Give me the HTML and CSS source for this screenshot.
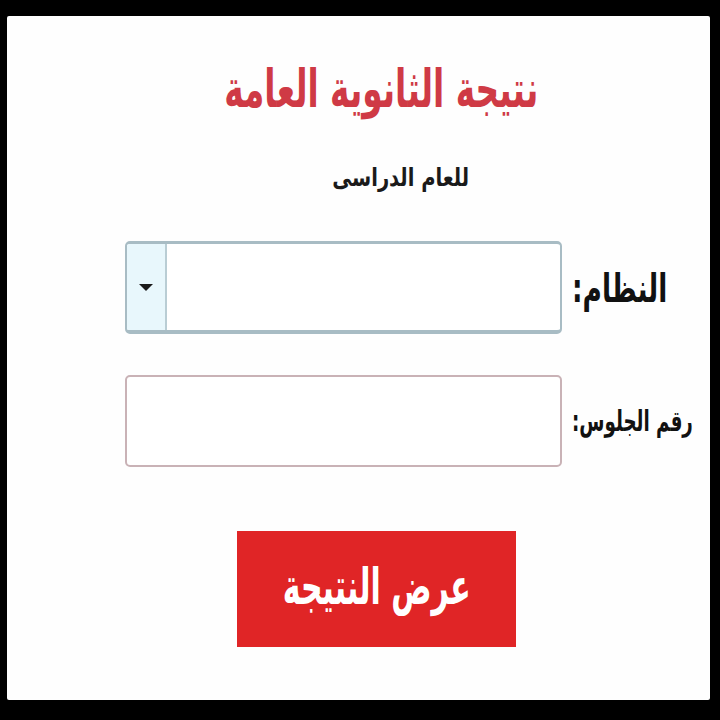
FILE: index.html
```html
<!DOCTYPE html>
<html lang="ar">
<head>
<meta charset="utf-8">
<link rel="stylesheet" href="styles.css">
</head>
<body>
<div class="panel">
  <h1 class="title"><span class="squeeze sq-title">نتيجة الثانوية العامة</span></h1>
  <p class="subtitle"><span class="squeeze sq-sub">للعام الدراسى</span></p>
  <div class="row row-select">
    <div class="select">
      <div class="arrow"><span class="tri"></span></div>
      <div class="field"></div>
    </div>
    <label class="label label-big"><span class="squeeze sq-big">النظام:</span></label>
  </div>
  <div class="row row-input">
    <div class="input"></div>
    <label class="label label-small"><span class="squeeze sq-small">رقم الجلوس:</span></label>
  </div>
  <div class="btn-row">
    <button class="btn"><span class="squeeze sq-btn">عرض النتيجة</span></button>
  </div>
</div>
</body>
</html>
```
FILE: styles.css
```css
html, body {
  margin: 0;
  padding: 0;
  background: #000;
}
body {
  width: 720px;
  height: 720px;
  overflow: hidden;
  font-family: "DejaVu Sans", sans-serif;
}
.panel {
  margin: 16px 10px 0 7px;
  height: 684px;
  background: #fefefe;
  display: flex;
  flex-direction: column;
  box-sizing: border-box;
  border-radius: 2px;
  overflow: hidden;
}
.squeeze {
  display: inline-block;
  white-space: nowrap;
  direction: rtl;
}
.title {
  margin: 42px 0 0 0;
  padding-left: 46px;
  text-align: center;
  font-size: 52px;
  line-height: 62px;
  font-weight: bold;
  color: #cf3a45;
}
.sq-title { transform: scaleX(0.63); }
.subtitle {
  margin: 43px 0 0 0;
  padding-left: 84px;
  text-align: center;
  font-size: 25px;
  line-height: 30px;
  font-weight: bold;
  color: #1a1a1a;
}
.sq-sub { transform: scaleX(0.78); }
.row {
  display: flex;
  align-items: center;
  padding-left: 118px;
  gap: 10px;
  overflow: hidden;
}
.row-select { margin-top: 48px; }
.row-input { margin-top: 41px; }
.select {
  flex-shrink: 0;
  width: 437px;
  height: 93px;
  box-sizing: border-box;
  border: 2px solid #a8bcc4;
  border-top-width: 3px;
  border-bottom-width: 4px;
  border-radius: 5px;
  display: flex;
  overflow: hidden;
  background: #fff;
}
.arrow {
  width: 38px;
  background: #e8f7fc;
  border-right: 2px solid #b9cdd4;
  display: flex;
  align-items: center;
  justify-content: center;
}
.tri {
  width: 0;
  height: 0;
  border-left: 7px solid transparent;
  border-right: 7px solid transparent;
  border-top: 7px solid #1a1a1a;
}
.field { flex: 1; }
.input {
  flex-shrink: 0;
  width: 437px;
  height: 92px;
  box-sizing: border-box;
  border: 2px solid #c9b2b6;
  border-radius: 5px;
  background: #fff;
}
.label {
  font-weight: bold;
  color: #111;
  white-space: nowrap;
}
.label .squeeze { transform-origin: left center; }
.label-big { font-size: 40px; }
.sq-big { transform: scaleX(0.66); }
.label-small { font-size: 29px; }
.sq-small { transform: scaleX(0.63); }
.btn-row {
  display: flex;
  padding-left: 230px;
  margin-top: 64px;
}
.btn {
  flex-shrink: 0;
  width: 279px;
  height: 116px;
  border: none;
  background: #e02526;
  color: #fff;
  font-family: "DejaVu Sans", sans-serif;
  font-weight: bold;
  font-size: 50px;
  padding: 0 0 4px 0;
  overflow: hidden;
  display: flex;
  justify-content: center;
  align-items: center;
}
.sq-btn { flex-shrink: 0; transform: scaleX(0.6); }
```
